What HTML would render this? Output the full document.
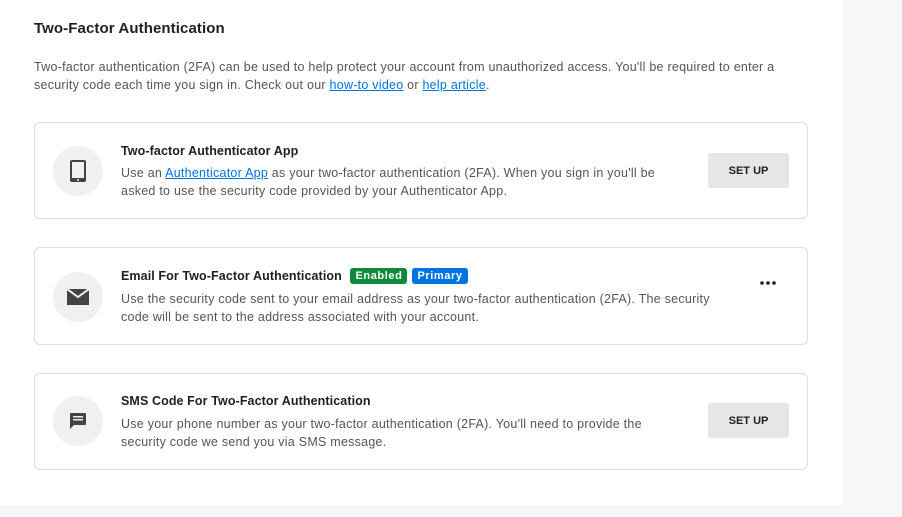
<!DOCTYPE html>
<html><head><style>
body{margin:0;width:902px;height:517px;background:#f7f7f7;font-family:"Liberation Sans",sans-serif;position:relative;overflow:hidden}
.panel{position:absolute;left:0;top:0;width:843px;height:505px;background:#fff}
h1{position:absolute;left:34px;top:20px;margin:0;font-size:15px;font-weight:bold;color:#202020;letter-spacing:.1px}
.desc{position:absolute;left:34px;top:58px;width:770px;font-size:12.5px;line-height:18px;color:#555;letter-spacing:.25px}
a{color:#0074e4;text-decoration:underline}
.card{position:absolute;left:34px;width:774px;border:1px solid #ddd;border-radius:6px;box-sizing:border-box}
.ic{position:absolute;left:18px;width:50px;height:50px;border-radius:50%;background:#f0f0f0;display:flex;align-items:center;justify-content:center}
.t{position:absolute;left:86px;font-size:12.5px;font-weight:bold;color:#202020;letter-spacing:.1px}
.p{position:absolute;left:86px;width:560px;font-size:12.5px;line-height:18px;color:#555;letter-spacing:.25px}
.btn{position:absolute;left:673px;width:81px;height:35px;background:#e6e6e6;border-radius:3px;font-size:11px;font-weight:bold;color:#202020;display:flex;align-items:center;justify-content:center}
.b{display:inline-block;color:#fff;font-size:11px;font-weight:bold;padding:2px 5px;border-radius:3px;margin-left:5px;vertical-align:1px;letter-spacing:.6px}
</style></head><body>
<div class="panel"></div>
<h1>Two-Factor Authentication</h1>
<div class="desc">Two-factor authentication (2FA) can be used to help protect your account from unauthorized access. You'll be required to enter a security code each time you sign in. Check out our <a>how-to video</a> or <a>help article</a>.</div>

<div class="card" style="top:122px;height:97px">
<div class="ic" style="top:23px"><svg width="16" height="22" viewBox="0 0 16 22"><rect x="0" y="0" width="16" height="22" rx="2" fill="#444"/><rect x="2" y="2" width="12" height="16" fill="#f0f0f0"/><circle cx="8" cy="20" r="1" fill="#f0f0f0"/></svg></div>
<div class="t" style="top:21px">Two-factor Authenticator App</div>
<div class="p" style="top:41px">Use an <a>Authenticator App</a> as your two-factor authentication (2FA). When you sign in you'll be asked to use the security code provided by your Authenticator App.</div>
<div class="btn" style="top:30px">SET UP</div>
</div>

<div class="card" style="top:247px;height:98px">
<div class="ic" style="top:24px"><svg width="22" height="16" viewBox="0 0 22 16"><rect width="22" height="16" fill="#444"/><path d="M0 0 L11 8 L22 0" fill="none" stroke="#f0f0f0" stroke-width="2"/></svg></div>
<div class="t" style="top:20px">Email For Two-Factor Authentication <span class="b" style="background:#0d8a3c">Enabled</span><span class="b" style="background:#0074e4">Primary</span></div>
<div class="p" style="top:42px;width:610px">Use the security code sent to your email address as your two-factor authentication (2FA). The security code will be sent to the address associated with your account.</div>
<svg style="position:absolute;left:725px;top:33px" width="16" height="4"><circle cx="2" cy="2" r="1.8" fill="#202020"/><circle cx="8" cy="2" r="1.8" fill="#202020"/><circle cx="14" cy="2" r="1.8" fill="#202020"/></svg>
</div>

<div class="card" style="top:373px;height:97px">
<div class="ic" style="top:22px"><svg width="18" height="18" viewBox="0 0 18 18"><path d="M2 1h14a1 1 0 0 1 1 1v10a1 1 0 0 1-1 1H5l-4 4V2a1 1 0 0 1 1-1z" fill="#444"/><rect x="4" y="4" width="10" height="1.5" fill="#f0f0f0"/><rect x="4" y="7" width="10" height="1.5" fill="#f0f0f0"/></svg></div>
<div class="t" style="top:20px">SMS Code For Two-Factor Authentication</div>
<div class="p" style="top:41px">Use your phone number as your two-factor authentication (2FA). You'll need to provide the security code we send you via SMS message.</div>
<div class="btn" style="top:29px">SET UP</div>
</div>
</body></html>
